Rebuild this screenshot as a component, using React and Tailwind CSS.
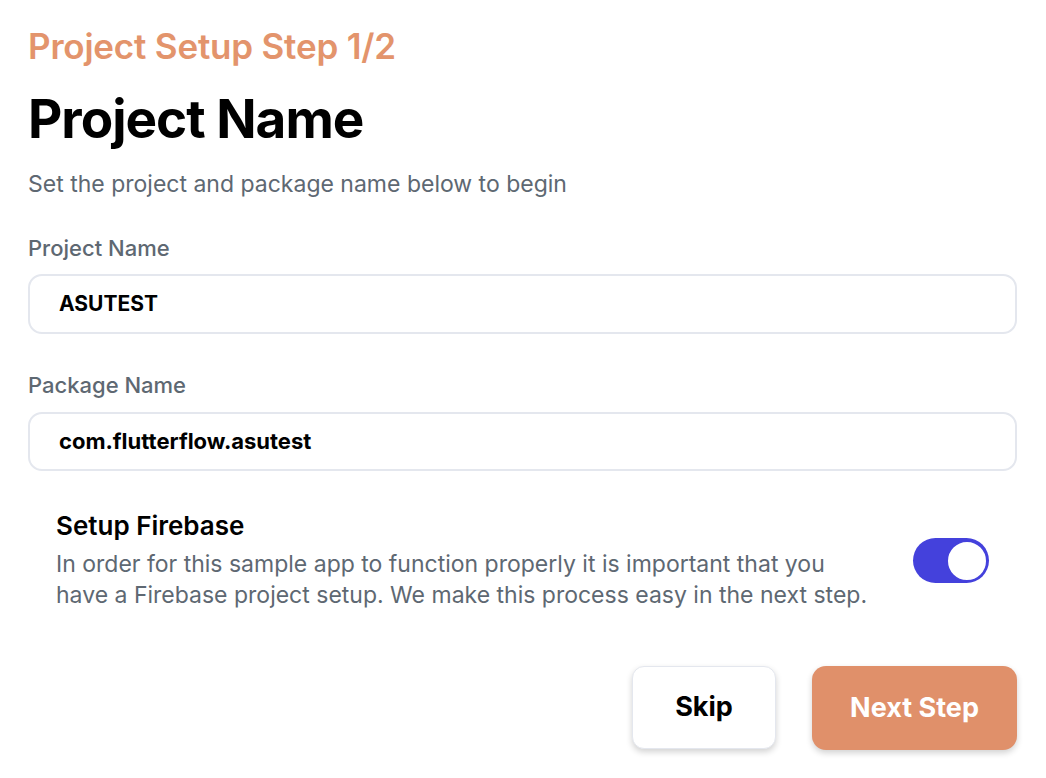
export default function App() {
  return (
    <div className="w-[1046px] h-[778px] bg-white overflow-hidden" style={{ fontFamily: "Inter, 'Noto Sans', sans-serif" }}>
      <div className="pl-[28px] pr-[29px] pt-[26px] flex flex-col">
        <div className="text-[35px] leading-[40px] font-semibold text-[#E3946C] tracking-[-0.2px]">Project Setup Step 1/2</div>
        <h1 className="mt-[23px] text-[53px] leading-[60px] font-bold text-black tracking-[-1px]">Project Name</h1>
        <p className="mt-[21px] text-[23px] leading-[28px] text-[#5E6872]">Set the project and package name below to begin</p>

        <label className="mt-[36px] text-[22px] leading-[28px] font-medium text-[#5E6872]">Project Name</label>
        <div className="mt-[12px] h-[60px] rounded-[14px] border-2 border-[#E4E7EE] flex items-center pl-[29px] text-[21px] font-bold text-black">ASUTEST</div>

        <label className="mt-[37px] text-[22px] leading-[28px] font-medium text-[#5E6872]">Package Name</label>
        <div className="mt-[13px] h-[59px] rounded-[14px] border-2 border-[#E4E7EE] flex items-center pl-[29px] text-[22px] font-bold text-black">com.flutterflow.asutest</div>

        <div className="mt-[39px] pl-[28px] pr-[28px] flex items-center justify-between">
          <div className="flex flex-col">
            <div className="text-[26px] leading-[32px] font-semibold text-black">Setup Firebase</div>
            <div className="mt-[7px] text-[23px] leading-[31px] text-[#5E6872] whitespace-nowrap">
              In order for this sample app to function properly it is important that you
              <br />
              have a Firebase project setup. We make this process easy in the next step.
            </div>
          </div>
          <div className="w-[76px] h-[45px] rounded-full bg-[#4441DC] flex items-center justify-end p-[1px]">
            <div className="w-[42px] h-[42px] rounded-full bg-white border-2 border-[#4441DC]"></div>
          </div>
        </div>

        <div className="mt-[55px] flex justify-end gap-[36px]">
          <button className="w-[144px] h-[83px] rounded-[12px] bg-white border border-[#E4E7EE] shadow-[0_3px_6px_rgba(0,0,0,0.18)] text-[27px] font-bold text-black">Skip</button>
          <button className="w-[205px] h-[84px] rounded-[14px] bg-[#E0906A] shadow-[0_3px_6px_rgba(0,0,0,0.18)] text-[27px] font-bold text-white">Next Step</button>
        </div>
      </div>
    </div>
  );
}
